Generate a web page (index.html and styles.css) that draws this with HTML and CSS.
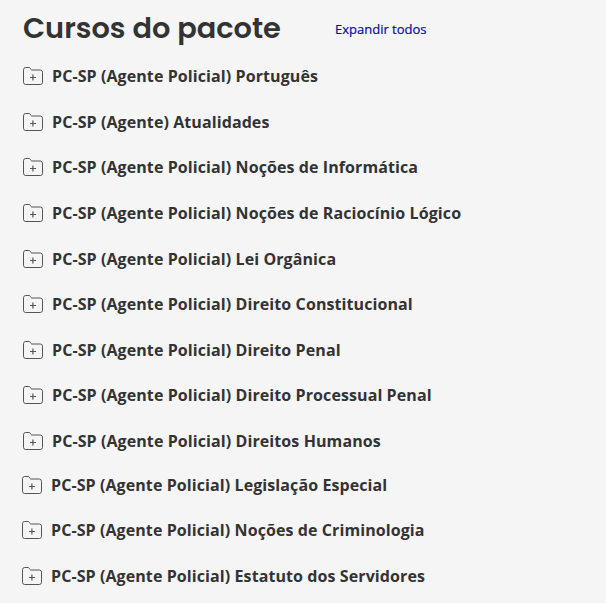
FILE: index.html
```
<!DOCTYPE html>
<html lang="pt-BR">
<head>
    <meta charset="UTF-8">
    <title>Cursos do pacote</title>
    <link rel="stylesheet" href="styles.css">
</head>
<body>
<svg class="sprite">
    <symbol id="folder" viewBox="0 0 20 18">
        <path d="M.5 15.3V2.7Q.5.5 2.7.5H6Q6.8.5 7.2 1.2L8 2.5Q8.3 3 9 3H17.3Q19.5 3 19.5 5.2V15.3Q19.5 17.5 17.3 17.5H2.7Q.5 17.5 .5 15.3Z"/>
        <path d="M7 10.5H13M9.9 7.5V13.5" stroke-width="1.2"/>
    </symbol>
</svg>
<div class="header">
    <h2>Cursos do pacote</h2>
    <a href="#" class="expand">Expandir todos</a>
</div>
<ul class="list">
    <li><svg class="icon"><use href="#folder"/></svg><span>PC-SP (Agente Policial) Português</span></li>
    <li><svg class="icon"><use href="#folder"/></svg><span>PC-SP (Agente) Atualidades</span></li>
    <li><svg class="icon"><use href="#folder"/></svg><span>PC-SP (Agente Policial) Noções de Informática</span></li>
    <li><svg class="icon"><use href="#folder"/></svg><span>PC-SP (Agente Policial) Noções de Raciocínio Lógico</span></li>
    <li><svg class="icon"><use href="#folder"/></svg><span>PC-SP (Agente Policial) Lei Orgânica</span></li>
    <li><svg class="icon"><use href="#folder"/></svg><span>PC-SP (Agente Policial) Direito Constitucional</span></li>
    <li><svg class="icon"><use href="#folder"/></svg><span>PC-SP (Agente Policial) Direito Penal</span></li>
    <li><svg class="icon"><use href="#folder"/></svg><span>PC-SP (Agente Policial) Direito Processual Penal</span></li>
    <li><svg class="icon"><use href="#folder"/></svg><span>PC-SP (Agente Policial) Direitos Humanos</span></li>
</ul>
<ul class="list list-more">
    <li><svg class="icon"><use href="#folder"/></svg><span>PC-SP (Agente Policial) Legislação Especial</span></li>
    <li><svg class="icon"><use href="#folder"/></svg><span>PC-SP (Agente Policial) Noções de Criminologia</span></li>
    <li><svg class="icon"><use href="#folder"/></svg><span>PC-SP (Agente Policial) Estatuto dos Servidores</span></li>
</ul>
</body>
</html>
```
FILE: styles.css
```
* {
    margin: 0;
    padding: 0;
    box-sizing: border-box;
}

body {
    height: 603px;
    overflow: hidden;
    background-color: #f5f5f5;
    color: #333;
    font-family: "Open Sans", sans-serif;
}

ul {
    list-style: none;
}

.sprite {
    display: none;
}

.header {
    display: flex;
    align-items: center;
    height: 53.45px;
    padding: 4px 0 0 23px;
}

.header h2 {
    width: 312px;
    margin-top: -2px;
    font: 600 28.8px/40px Poppins, Inter, sans-serif;
    white-space: nowrap;
}

.expand {
    color: #0c0ca8;
    font-size: 13px;
    font-weight: 500;
    line-height: 20px;
    text-decoration: none;
    -webkit-text-stroke: .2px #0c0ca8;
}

.list {
    padding-left: 23px;
}

.list li {
    display: flex;
    align-items: center;
    height: 45.6px;
    font-size: 16px;
    font-weight: 700;
    line-height: 24px;
    letter-spacing: .09px;
    white-space: nowrap;
}

.list-more {
    margin-top: -1.7px;
    padding-left: 22px;
}

.icon {
    width: 20px;
    height: 18px;
    margin-right: 9px;
    fill: none;
    stroke: #555;
    stroke-width: 1;
}
```
